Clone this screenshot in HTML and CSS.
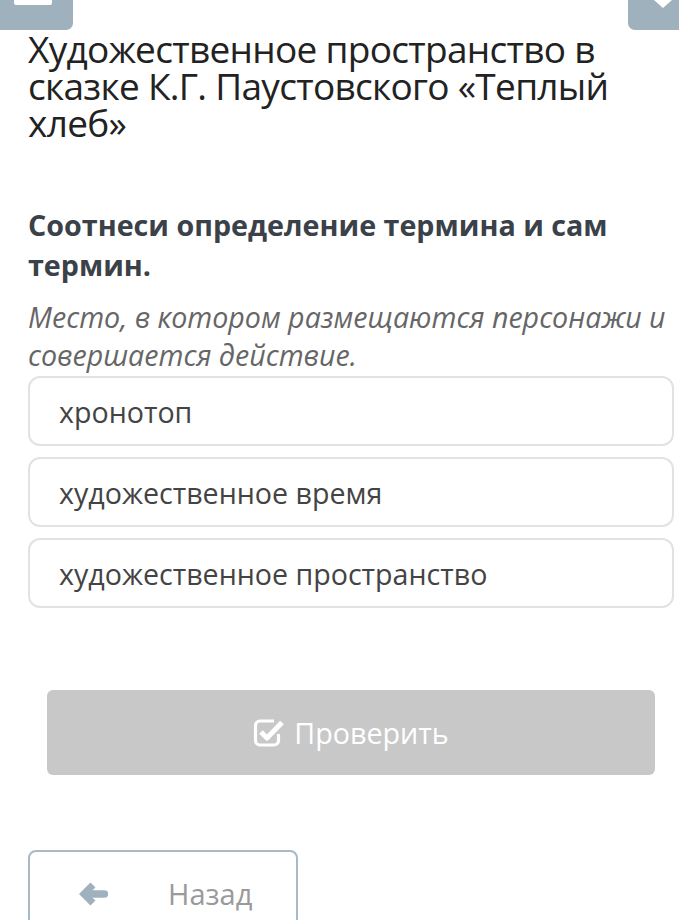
FILE: index.html
```html
<!DOCTYPE html>
<html lang="ru">
<head>
<meta charset="utf-8">
<link rel="stylesheet" href="styles.css">
</head>
<body>
<div class="topbar">
  <div class="tab tab-left"><span class="tab-left-mark"></span></div>
  <div class="tab tab-right">
    <svg class="tab-right-mark" width="51" height="30" viewBox="0 0 51 30"><path d="M26 0 L35 8 L44 0 Z" fill="#fff"/></svg>
  </div>
</div>
<main class="page">
  <h1 class="title">Художественное пространство в сказке К.Г. Паустовского «Теплый хлеб»</h1>
  <h2 class="task">Соотнеси определение термина и сам термин.</h2>
  <p class="definition">Место, в котором размещаются персонажи и совершается действие.</p>
  <div class="options">
    <div class="option">хронотоп</div>
    <div class="option">художественное время</div>
    <div class="option">художественное пространство</div>
  </div>
  <div class="check-wrap">
    <button class="check">
      <svg width="32" height="30" viewBox="0 0 32 30" class="check-icon">
        <path d="M21 4 H7 a4.5 4.5 0 0 0 -4.5 4.5 V23.5 a4.5 4.5 0 0 0 4.5 4.5 H21 a4.5 4.5 0 0 0 4.5 -4.5 V17" fill="none" stroke="#fff" stroke-width="3.2"/>
        <path d="M8 15 L14 21 L29 5.5" fill="none" stroke="#fff" stroke-width="5" stroke-linejoin="round"/>
      </svg>
      <span>Проверить</span>
    </button>
  </div>
  <div class="back">
    <svg width="30" height="26" viewBox="0 0 30 26" class="back-icon">
      <path d="M2 13 L12.5 2.5 L16.5 6.5 L12.5 10 H26.5 a3 3 0 0 1 0 6 H12.5 L16.5 19.5 L12.5 23.5 Z" fill="#9fb1bd" stroke="#9fb1bd" stroke-width="1.5" stroke-linejoin="round"/>
    </svg>
    <span class="back-text">Назад</span>
  </div>
</main>
</body>
</html>
```
FILE: styles.css
```css
* { box-sizing: border-box; }
html, body { margin: 0; padding: 0; background: #fff; }
body {
  font-family: "Open Sans", "Noto Sans", sans-serif;
  width: 679px;
  height: 920px;
  overflow: hidden;
  position: relative;
}
.topbar {
  display: flex;
  justify-content: space-between;
  height: 30px;
}
.tab {
  background: #9fb1bd;
  height: 30px;
  position: relative;
}
.tab-left {
  width: 73px;
  border-bottom-right-radius: 7px;
}
.tab-left-mark {
  position: absolute;
  left: 14px;
  top: 0;
  width: 38px;
  height: 5px;
  background: #fff;
  border-bottom-left-radius: 2px;
  border-bottom-right-radius: 2px;
}
.tab-right {
  width: 51px;
  border-bottom-left-radius: 7px;
}
.tab-right-mark { position: absolute; left: 0; top: 0; }
.page {
  padding: 0 4px 0 28px;
}
.title {
  font-weight: 400;
  font-size: 37px;
  line-height: 37px;
  color: #222;
  margin: 0;
  letter-spacing: -0.7px;
}
.task {
  font-weight: 700;
  font-size: 28.7px;
  line-height: 40px;
  color: #3b4148;
  margin: 64px 0 0 0;
}
.definition {
  font-style: italic;
  font-size: 28.6px;
  line-height: 38px;
  color: #666;
  margin: 13px 0 0 0;
}
.options {
  display: flex;
  flex-direction: column;
  gap: 11px;
  margin-top: 2px;
}
.option {
  height: 70px;
  border: 2px solid #e2e2e2;
  border-radius: 12px;
  padding-left: 29px;
  display: flex;
  align-items: center;
  font-size: 28.6px;
  color: #444;
  margin-right: 1px;
}
.check-wrap {
  margin-top: 82px;
  padding: 0 19px;
}
.check {
  width: 608px;
  height: 85px;
  border: none;
  border-radius: 6px;
  background: #c8c8c8;
  color: #fff;
  font-family: "Open Sans", "Noto Sans", sans-serif;
  font-size: 28.7px;
  display: flex;
  align-items: center;
  justify-content: center;
  gap: 9px;
  padding: 0;
}
.check-icon { margin-top: -2px; }
.back {
  margin-top: 75px;
  width: 270px;
  height: 90px;
  border: 2px solid #a9b9c5;
  border-radius: 8px;
  display: flex;
  align-items: flex-start;
  padding: 27px 0 0 48px;
}
.back-icon { margin-top: 2px; }
.back-text {
  margin-left: 60px;
  font-size: 29px;
  color: #9a9a9a;
  line-height: 30px;
}
```
